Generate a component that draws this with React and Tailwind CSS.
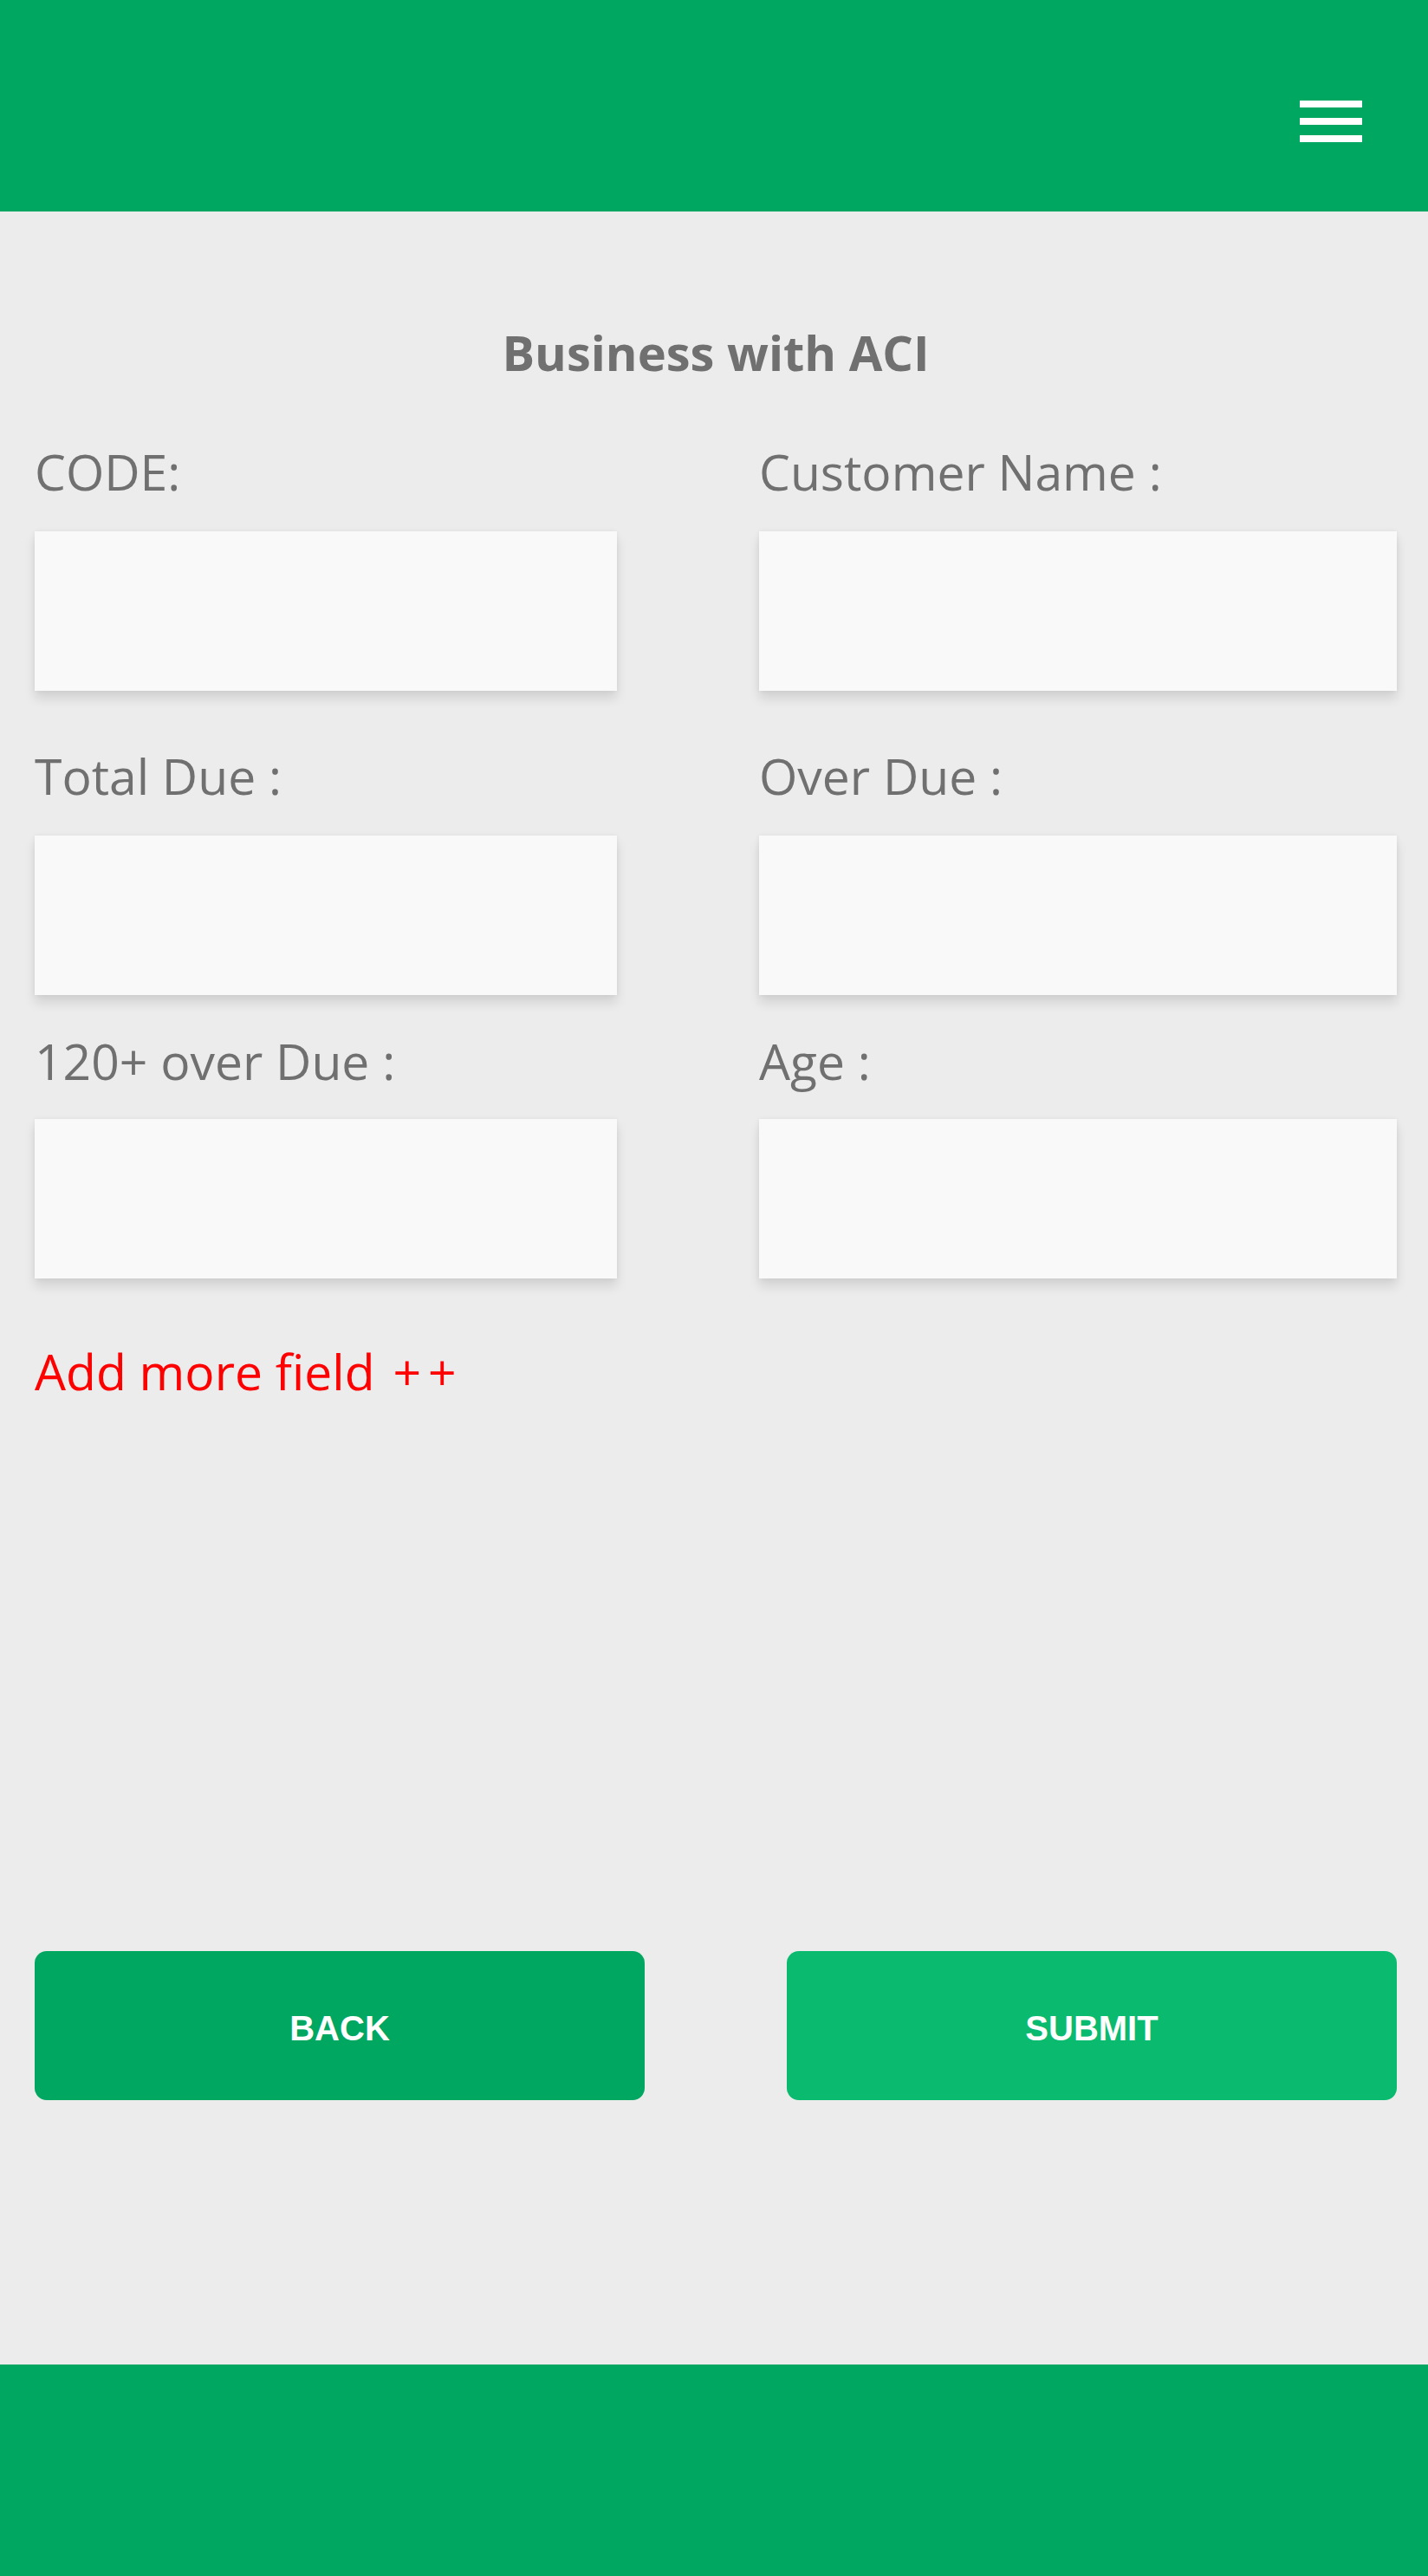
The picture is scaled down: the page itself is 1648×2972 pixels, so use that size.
import React from 'react';

const fields = [
    { left: 'CODE:', right: 'Customer Name :', labelTop: 'mt-[4px]', gap: 'mt-[35px]' },
    { left: 'Total Due :', right: 'Over Due :', labelTop: 'mt-[65px]', gap: 'mt-[35px]' },
    { left: '120+ over Due :', right: 'Age :', labelTop: 'mt-[43px]', gap: 'mt-[33px]' },
];

const Field = ({ label, labelTop, gap }) => (
    <div className={`flex flex-col ${labelTop}`}>
        <label className="text-[57px] leading-[67px] text-[#707070]">{label}</label>
        <input
            type="text"
            className={`${gap} h-[184px] w-full bg-[#f9f9f9] outline-none shadow-[0_9px_12px_rgba(0,0,0,0.11),0_0_6px_rgba(0,0,0,0.06)]`}
        />
    </div>
);

const App = () => {
    return (
        <div className="flex min-h-[2972px] flex-col bg-[#ececec] font-['Open_Sans','Noto_Sans',sans-serif]">
            <header className="flex h-[244px] items-start justify-end bg-[#00a761] pr-[76px] pt-[116px]">
                <button className="flex w-[72px] flex-col gap-[12px]">
                    <span className="block h-[8px] w-full bg-white" />
                    <span className="block h-[8px] w-full bg-white" />
                    <span className="block h-[8px] w-full bg-white" />
                </button>
            </header>

            <main className="flex flex-1 flex-col pl-[40px] pr-[36px]">
                <h1 className="mt-[129px] text-center text-[56px] font-bold leading-[67px] text-[#707070]">
                    Business with ACI
                </h1>

                <div className="mt-[67px] flex flex-col">
                    {fields.map((row) => (
                        <div key={row.left} className="grid grid-cols-[672px_736px] gap-x-[164px]">
                            <Field label={row.left} labelTop={row.labelTop} gap={row.gap} />
                            <Field label={row.right} labelTop={row.labelTop} gap={row.gap} />
                        </div>
                    ))}
                </div>

                <p className="mt-[74px] text-[57px] leading-[67px] text-[#ff0000]">
                    Add more field <span className="ml-[6px] tracking-[8px]">++</span>
                </p>

                <div className="mt-[635px] grid grid-cols-2 gap-x-[164px]">
                    <button className="h-[172px] rounded-[14px] bg-[#00a761] pt-[6px] font-['Liberation_Sans',Arial,sans-serif] text-[40px] font-bold text-white">
                        BACK
                    </button>
                    <button className="h-[172px] rounded-[14px] bg-[#0aba6e] pt-[6px] font-['Liberation_Sans',Arial,sans-serif] text-[40px] font-bold text-white">
                        SUBMIT
                    </button>
                </div>
            </main>

            <footer className="h-[244px] bg-[#00a761]" />
        </div>
    );
};

export default App;
